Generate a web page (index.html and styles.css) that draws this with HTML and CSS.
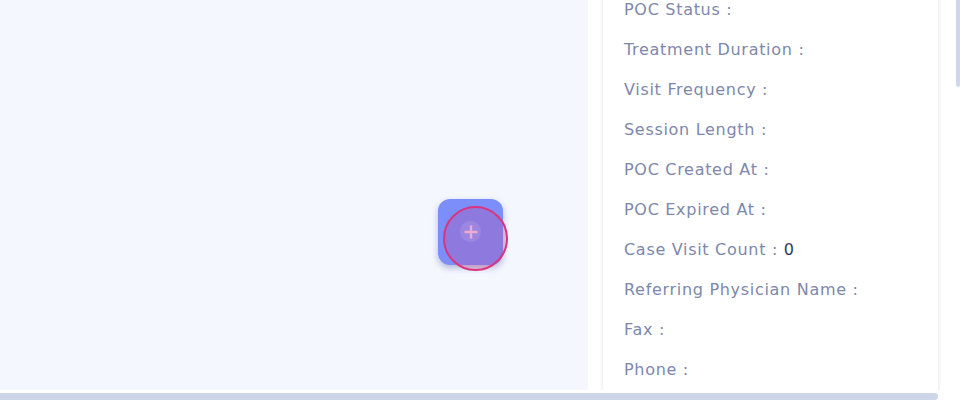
FILE: index.html
```html
<!DOCTYPE html>
<html>
<head>
<meta charset="utf-8">
<link rel="stylesheet" href="styles.css">
</head>
<body>
<div class="viewport">
  <div class="content">
    <main class="main">
      <div class="fab-wrap">
        <button class="fab" aria-label="Add">
          <span class="fab-glow"></span>
          <svg class="fab-plus" width="14" height="14" viewBox="0 0 14 14"><path d="M7 0.5v13M0.5 7h13" stroke="#f8cdea" stroke-width="2.4"/></svg>
        </button>
        <span class="focus-ring"></span>
      </div>
    </main>
    <aside class="side">
      <div class="card">
        <ul class="fields">
          <li>POC Status :</li>
          <li>Treatment Duration :</li>
          <li>Visit Frequency :</li>
          <li>Session Length :</li>
          <li>POC Created At :</li>
          <li>POC Expired At :</li>
          <li>Case Visit Count : <span class="val">0</span></li>
          <li>Referring Physician Name :</li>
          <li>Fax :</li>
          <li>Phone :</li>
        </ul>
      </div>
    </aside>
    <div class="vscroll"><span class="vthumb"></span></div>
  </div>
  <div class="hscroll"><span class="hthumb"></span></div>
</div>
</body>
</html>
```

FILE: styles.css
```css
html, body {
  margin: 0;
  padding: 0;
  background: #ffffff;
}
body {
  font-family: "DejaVu Sans", "Noto Sans", sans-serif;
  width: 960px;
  height: 402px;
  overflow: hidden;
}
.viewport {
  display: flex;
  flex-direction: column;
  height: 402px;
}
.content {
  display: flex;
  height: 390px;
  overflow: hidden;
  flex: none;
}
.main {
  width: 588px;
  flex: none;
  background: #f4f7fe;
  position: relative;
}
.fab-wrap {
  position: absolute;
  left: 438px;
  top: 199px;
}
.fab {
  width: 65px;
  height: 66px;
  border: none;
  border-radius: 12px;
  background: #7b8ef9;
  box-shadow: 0 3px 6px rgba(60, 70, 140, 0.35);
  display: flex;
  align-items: center;
  justify-content: center;
  padding: 0;
  position: relative;
}
.fab-glow {
  position: absolute;
  left: 22px;
  top: 22px;
  width: 21px;
  height: 21px;
  border-radius: 50%;
  background: rgba(255, 255, 255, 0.15);
}
.fab-plus {
  position: relative;
}
.focus-ring {
  position: absolute;
  left: 5px;
  top: 7px;
  width: 61px;
  height: 61px;
  border-radius: 50%;
  border: 2px solid #d9357f;
  background: rgba(205, 60, 140, 0.24);
}
.side {
  flex: none;
  width: 350px;
  padding-left: 15px;
  box-sizing: border-box;
  background: #ffffff;
}
.card {
  background: #ffffff;
  width: 335px;
  height: 420px;
  box-shadow: 0 0 4px rgba(40, 50, 90, 0.16);
  box-sizing: border-box;
  padding-left: 21px;
}
.fields {
  list-style: none;
  margin: -10px 0 0 0;
  padding: 0;
}
.fields li {
  height: 40px;
  line-height: 40px;
  font-size: 16px;
  letter-spacing: 0.7px;
  color: #7d88ab;
  white-space: nowrap;
}
.val {
  color: #2e3a60;
}
.vscroll {
  flex: 1;
  display: flex;
  justify-content: flex-end;
}
.vthumb {
  width: 4px;
  height: 87px;
  background: #cfd8ea;
  border-radius: 0 0 3px 3px;
}
.hscroll {
  margin-top: 3px;
  height: 9px;
  display: flex;
}
.hthumb {
  width: 938px;
  height: 7px;
  background: #cdd5e8;
  border-radius: 0 4px 4px 0;
}
```
